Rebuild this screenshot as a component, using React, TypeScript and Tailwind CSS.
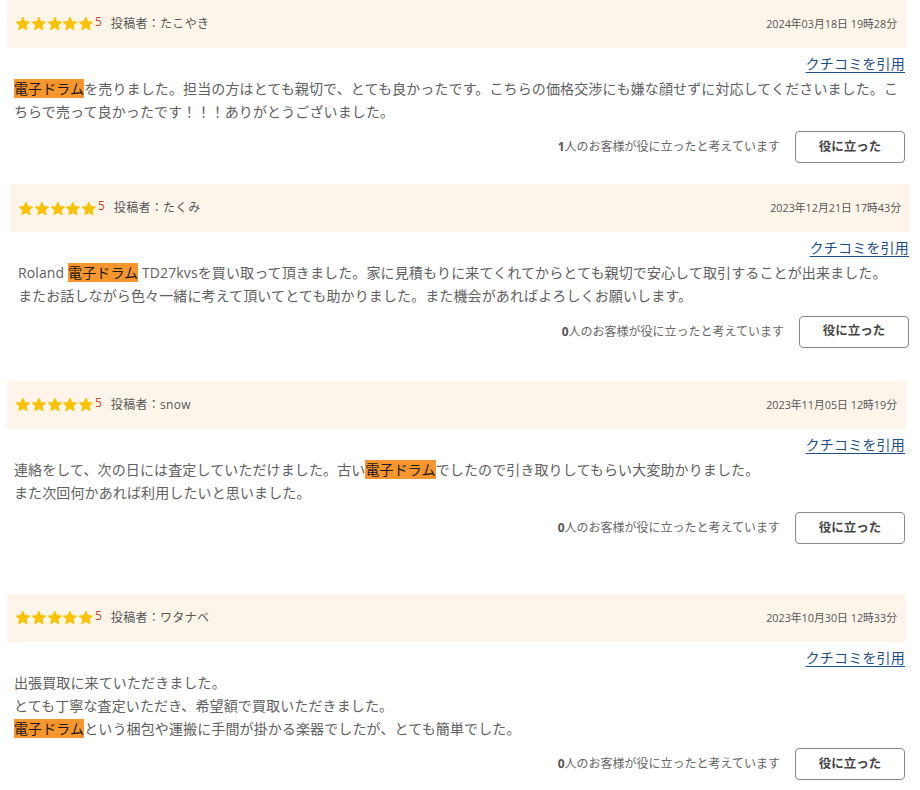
import React from "react";

const FONT = { fontFamily: "'Open Sans', 'Noto Sans CJK JP', sans-serif" };

function Star() {
  return (
    <svg viewBox="0 0 24 24" className="w-[15.8px] h-[15.8px] block">
      <path
        d="M12 1.6l3.1 6.6 7.2.85-5.35 4.9 1.45 7.15L12 17.55l-6.4 3.55 1.45-7.15-5.35-4.9 7.2-.85z"
        fill="#f7c200"
        stroke="#f7c200"
        strokeWidth="1.2"
        strokeLinejoin="round"
      />
    </svg>
  );
}

function HL({ children }: { children: React.ReactNode }) {
  return <span className="bg-[#f7952f] text-[#1a1a1a]">{children}</span>;
}

type Review = {
  name: string;
  date: string;
  body: React.ReactNode;
  count: string;
  wrap: string;
  inner: string;
};

const reviews: Review[] = [
  {
    name: "たこやき",
    date: "2024年03月18日 19時28分",
    count: "1",
    wrap: "ml-[7px] w-[899px]",
    inner: "pl-[7px] pr-[1px]",
    body: (
      <>
        <HL>電子ドラム</HL>を売りました。担当の方はとても親切で、とても良かったです。こちらの価格交渉にも嫌な顔せずに対応してくださいました。こちらで売って良かったです！！！ありがとうございました。
      </>
    ),
  },
  {
    name: "たくみ",
    date: "2023年12月21日 17時43分",
    count: "0",
    wrap: "ml-[10px] w-[900px] mt-[21px]",
    inner: "pl-[8px] pr-[1px]",
    body: (
      <>
        Roland <HL>電子ドラム</HL> TD27kvsを買い取って頂きました。家に見積もりに来てくれてからとても親切で安心して取引することが出来ました。
        <br />
        またお話しながら色々一緒に考えて頂いてとても助かりました。また機会があればよろしくお願いします。
      </>
    ),
  },
  {
    name: "snow",
    date: "2023年11月05日 12時19分",
    count: "0",
    wrap: "ml-[7px] w-[899px] mt-[33px]",
    inner: "pl-[7px] pr-[1px]",
    body: (
      <>
        連絡をして、次の日には査定していただけました。古い<HL>電子ドラム</HL>でしたので引き取りしてもらい大変助かりました。
        <br />
        また次回何かあれば利用したいと思いました。
      </>
    ),
  },
  {
    name: "ワタナベ",
    date: "2023年10月30日 12時33分",
    count: "0",
    wrap: "ml-[7px] w-[899px] mt-[50px]",
    inner: "pl-[7px] pr-[1px]",
    body: (
      <>
        出張買取に来ていただきました。
        <br />
        とても丁寧な査定いただき、希望額で買取いただきました。
        <br />
        <HL>電子ドラム</HL>という梱包や運搬に手間が掛かる楽器でしたが、とても簡単でした。
      </>
    ),
  },
];

function Card({ r }: { r: Review }) {
  return (
    <div className={r.wrap}>
      <div className="h-[48px] bg-[#fdf5ea] flex items-center justify-between pl-[8px] pr-[8px]">
        <div className="flex items-center">
          <div className="flex items-center">
            <Star />
            <Star />
            <Star />
            <Star />
            <Star />
          </div>
          <span className="text-[12px] leading-none text-[#c4472a] relative -top-[2px] ml-[1px]">5</span>
          <span className="text-[12px] text-[#555] ml-[9px] tracking-[0.3px]">投稿者：{r.name}</span>
        </div>
        <span className="text-[10.8px] text-[#555] pr-[1px]">{r.date}</span>
      </div>
      <div className={r.inner}>
        <div className="flex justify-end mt-[5px]">
          <a href="#" className="text-[14px] leading-[22px] text-[#1d4e86] underline underline-offset-[3px] tracking-[0.2px]">
            クチコミを引用
          </a>
        </div>
        <p className="mt-[3px] text-[14px] leading-[22.7px] text-[#606060] tracking-[0.12px]">{r.body}</p>
        <div className="flex justify-end items-center mt-[8px]">
          <span className="text-[12px] text-[#666]">
            <b className="font-bold text-[#555]">{r.count}</b>人のお客様が役に立ったと考えています
          </span>
          <button className="ml-[15px] w-[110px] h-[32px] border-[1.5px] border-[#888] rounded-[4px] bg-white text-[12.5px] font-bold text-[#444]">
            役に立った
          </button>
        </div>
      </div>
    </div>
  );
}

export default function App() {
  return (
    <div className="w-[920px] h-[790px] bg-white overflow-hidden" style={FONT}>
      {reviews.map((r, i) => (
        <Card key={i} r={r} />
      ))}
    </div>
  );
}
